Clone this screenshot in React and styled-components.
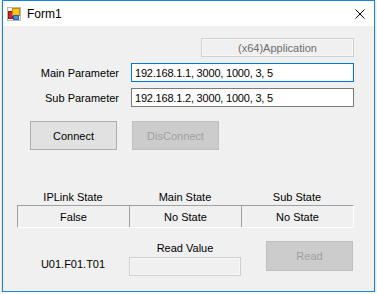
import React from "react";
import styled, { createGlobalStyle } from "styled-components";

const GlobalStyle = createGlobalStyle`
  html, body {
    margin: 0;
    padding: 0;
    background: #ffffff;
  }
  body {
    font-family: "Liberation Sans", Arial, sans-serif;
    font-size: 11px;
    color: #000;
  }
`;

const Window = styled.div`
  box-sizing: border-box;
  width: 373px;
  height: 292px;
  margin-left: 2px;
  border: 1px solid #1883d7;
  background: #f0f0f0;
  box-shadow: 0 1px 3px rgba(0, 0, 0, 0.25);
  display: flex;
  flex-direction: column;
`;

const TitleBar = styled.div`
  height: 25px;
  background: #ffffff;
  display: flex;
  align-items: center;
  padding-left: 4px;
`;

const Title = styled.span`
  margin-left: 6px;
  font-size: 12px;
  color: #000;
`;

const CloseBox = styled.div`
  margin-left: auto;
  margin-right: 9px;
  display: flex;
`;

const Body = styled.div`
  padding: 12px 0 0 14px;
  display: flex;
  flex-direction: column;
`;

const AppRow = styled.div`
  padding-left: 184px;
`;

const ReadOnlyBox = styled.div`
  box-sizing: border-box;
  width: ${(p) => p.$width}px;
  height: 19px;
  border: 1px solid #cfcfcf;
  box-shadow: inset 0 0 0 1px #f7f7f7;
  background: #f0f0f0;
  color: #6d6d6d;
  display: flex;
  align-items: center;
  justify-content: center;
`;

const ParamRow = styled.div`
  margin-top: 6px;
  display: flex;
  align-items: center;
  gap: 12px;
`;

const ParamLabel = styled.div`
  width: 102px;
  text-align: right;
`;

const TextBox = styled.div`
  box-sizing: border-box;
  width: 223px;
  height: 19px;
  padding-left: 3px;
  border: 1px solid ${(p) => (p.$focused ? "#0078d7" : "#7a7a7a")};
  background: #ffffff;
  display: flex;
  align-items: center;
  white-space: pre;
  letter-spacing: -0.2px;
`;

const ButtonRow = styled.div`
  margin-top: 14px;
  padding-left: 13px;
  display: flex;
  gap: 15px;
`;

const Button = styled.div`
  box-sizing: border-box;
  width: 87px;
  height: ${(p) => p.$height || 29}px;
  border: 1px solid ${(p) => (p.$disabled ? "#bfbfbf" : "#adadad")};
  background: ${(p) => (p.$disabled ? "#cccccc" : "#e1e1e1")};
  color: ${(p) => (p.$disabled ? "#a0a0a0" : "#000")};
  display: flex;
  align-items: center;
  justify-content: center;
`;

const Columns = styled.div`
  display: grid;
  grid-template-columns: 112px 112px 112px;
`;

const HeaderRow = styled(Columns)`
  margin-top: 38px;
  height: 17px;
  align-items: center;
  text-align: center;
`;

const StateTable = styled.div`
  box-sizing: border-box;
  width: 337px;
  height: 23px;
  border-top: 1px solid #a0a0a0;
  border-left: 1px solid #a0a0a0;
  border-bottom: 1px solid #ffffff;
  border-right: 1px solid #ffffff;
  display: grid;
  grid-template-columns: 112px 112px 111px;
`;

const StateCell = styled.div`
  border-right: ${(p) => (p.$last ? "none" : "1px solid #a0a0a0")};
  display: flex;
  align-items: center;
  justify-content: center;
`;

const BottomRow = styled(Columns)`
  margin-top: 13px;
  align-items: start;
`;

const IdLabel = styled.div`
  padding-top: 16px;
  line-height: 14px;
  text-align: center;
`;

const ReadGroup = styled.div`
  display: flex;
  flex-direction: column;
  align-items: center;
  gap: 2px;
`;

const ReadLabel = styled.div`
  line-height: 14px;
`;

const ReadCell = styled.div`
  display: flex;
  justify-content: flex-end;
`;

const FormIcon = () => (
  <svg width="14" height="14" viewBox="0 0 14 14">
    <rect x="0.5" y="0.5" width="13" height="13" fill="#f4f4f4" stroke="#b8b8b8" />
    <rect x="1.5" y="4.5" width="4" height="7" fill="#d42a2a" stroke="#8a1a1a" />
    <rect x="5.5" y="1.5" width="7" height="7" fill="#f5c518" stroke="#c48a00" />
    <rect x="6.5" y="8.5" width="5" height="4" fill="#4a8de0" stroke="#2a5fb0" />
  </svg>
);

const CloseIcon = () => (
  <svg width="10" height="10" viewBox="0 0 10 10">
    <path d="M0.5 0.5 L9.5 9.5 M9.5 0.5 L0.5 9.5" stroke="#000" strokeWidth="1" fill="none" />
  </svg>
);

const states = ["False", "No State", "No State"];

const App = () => {
  return (
    <>
      <GlobalStyle />
      <Window>
        <TitleBar>
          <FormIcon />
          <Title>Form1</Title>
          <CloseBox>
            <CloseIcon />
          </CloseBox>
        </TitleBar>
        <Body>
          <AppRow>
            <ReadOnlyBox $width={153}>(x64)Application</ReadOnlyBox>
          </AppRow>
          <ParamRow>
            <ParamLabel>Main Parameter</ParamLabel>
            <TextBox $focused>192.168.1.1, 3000, 1000, 3, 5</TextBox>
          </ParamRow>
          <ParamRow>
            <ParamLabel>Sub Parameter</ParamLabel>
            <TextBox>192.168.1.2, 3000, 1000, 3, 5</TextBox>
          </ParamRow>
          <ButtonRow>
            <Button>Connect</Button>
            <Button $disabled>DisConnect</Button>
          </ButtonRow>
          <HeaderRow>
            <div>IPLink State</div>
            <div>Main State</div>
            <div>Sub State</div>
          </HeaderRow>
          <StateTable>
            {states.map((s, i) => (
              <StateCell key={i} $last={i === states.length - 1}>
                {s}
              </StateCell>
            ))}
          </StateTable>
          <BottomRow>
            <IdLabel>U01.F01.T01</IdLabel>
            <ReadGroup>
              <ReadLabel>Read Value</ReadLabel>
              <ReadOnlyBox $width={112} />
            </ReadGroup>
            <ReadCell>
              <Button $disabled $height={30}>
                Read
              </Button>
            </ReadCell>
          </BottomRow>
        </Body>
      </Window>
    </>
  );
};

export default App;
